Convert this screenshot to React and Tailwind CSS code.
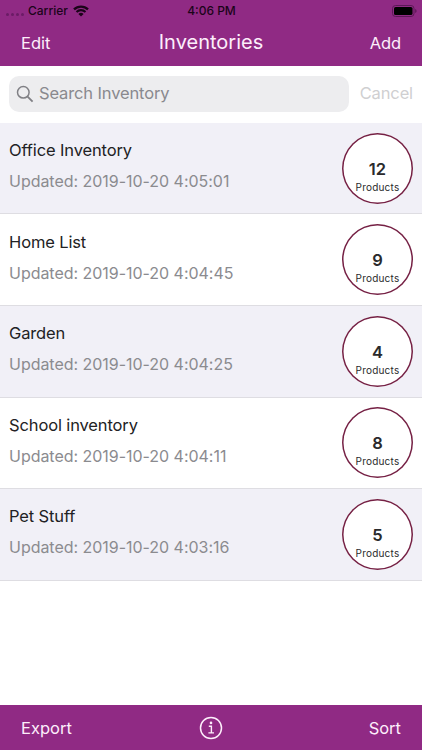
import React from "react";

const inventories = [
  { name: "Office Inventory", updated: "2019-10-20 4:05:01", count: 12 },
  { name: "Home List", updated: "2019-10-20 4:04:45", count: 9 },
  { name: "Garden", updated: "2019-10-20 4:04:25", count: 4 },
  { name: "School inventory", updated: "2019-10-20 4:04:11", count: 8 },
  { name: "Pet Stuff", updated: "2019-10-20 4:03:16", count: 5 },
];

const StatusBar = () => (
  <div className="grid h-[21px] grid-cols-3 items-center pl-[6px] pr-[5px] text-[12px] font-medium text-[#1b0419]">
    <div className="flex items-center">
      {/* Signal dots */}
      <div className="mr-[4px] mt-[7px] flex gap-[2px]">
        {[0, 1, 2, 3].map((dot) => (
          <span key={dot} className="h-[3px] w-[3px] rounded-full bg-[#6b1c66]" />
        ))}
      </div>
      <span>Carrier</span>
      <svg className="ml-[5px]" width="16" height="12" viewBox="0 0 16 12" fill="none">
        <path d="M1 4.4a10 10 0 0 1 14 0" stroke="#1b0419" strokeWidth="2.3" />
        <path d="M3.5 7a6.4 6.4 0 0 1 9 0" stroke="#1b0419" strokeWidth="2.1" />
        <path d="M8 11.6 5.4 8.9a3.8 3.8 0 0 1 5.2 0Z" fill="#1b0419" />
      </svg>
    </div>
    <span className="text-center">4:06 PM</span>
    <svg className="justify-self-end" width="25" height="12" viewBox="0 0 25 12">
      <rect x="0.5" y="0.5" width="21.5" height="11" rx="3" fill="none" stroke="#5c1857" />
      <rect x="2" y="2" width="18.5" height="8" rx="1.6" fill="#000" />
      <path d="M23.2 4v4q1.4-.5 1.4-2t-1.4-2Z" fill="#5c1857" />
    </svg>
  </div>
);

const SearchBar = () => (
  <div className="flex h-[57.4px] items-center px-[9px] text-[16.5px] tracking-[-0.13px]">
    <div className="flex h-9 w-[340px] items-center rounded-[10px] bg-[#ededef] pl-[7px] text-[#89898e]">
      <svg className="mr-[5px]" width="18" height="18" viewBox="0 0 18 18" fill="none" stroke="#808085">
        <circle cx="7.3" cy="7.3" r="5.8" strokeWidth="1.5" />
        <path d="m11.6 11.6 5 5" strokeWidth="1.9" />
      </svg>
      <span className="pb-px">Search Inventory</span>
    </div>
    <span className="ml-auto pb-px text-[#cfcfd1]">Cancel</span>
  </div>
);

const InventoryRow = ({ item }) => (
  <li className="flex h-[91.6px] items-center justify-between border-b border-[#dedde2] px-[9px] odd:bg-[#f1f0f7]">
    <div className="pb-[5.5px]">
      <p className="text-[16.5px] leading-6 tracking-[-0.13px] text-[#222224]">{item.name}</p>
      <p className="mt-[7px] text-[16px] leading-6 tracking-[-0.03px] text-[#8b8b8f]">
        Updated: {item.updated}
      </p>
    </div>
    <div className="flex h-[71px] w-[71px] flex-col items-center rounded-full bg-white pt-[26px] text-[#2a2a2c] shadow-[inset_0_0_0_1.5px_#752044]">
      <span className="text-[16.5px] font-semibold leading-5">{item.count}</span>
      <span className="text-[10px] leading-4 tracking-[0.2px]">Products</span>
    </div>
  </li>
);

const App = () => {
  return (
    <div className="flex h-[750px] w-[422px] flex-col overflow-hidden bg-white font-['Inter',sans-serif]">
      <header className="h-[65.5px] shrink-0 bg-[#902a84] text-[#fdeefb]">
        <StatusBar />
        <div className="grid h-[45px] grid-cols-3 items-center px-[21px] text-[16.5px]">
          <span className="pb-px">Edit</span>
          <span className="pb-[4px] text-center text-[20px]">Inventories</span>
          <span className="pb-px text-right tracking-[-0.1px]">Add</span>
        </div>
      </header>

      <SearchBar />

      <ul className="flex-1">
        {inventories.map((item) => (
          <InventoryRow key={item.name} item={item} />
        ))}
      </ul>

      <footer className="grid h-[45px] shrink-0 grid-cols-3 items-center bg-[#902a84] px-[21px] text-[16.5px] text-[#fdeefb]">
        <span className="pt-px">Export</span>
        <svg className="justify-self-center" width="24" height="24" viewBox="0 0 24 24" fill="none" stroke="#fdeefb">
          <circle cx="12" cy="12" r="10.5" strokeWidth="1.5" />
          <path d="M9.8 10.3h2.6v6.4M9.4 16.9h5.6" strokeWidth="1.4" />
          <circle cx="12" cy="6.9" r="1.3" fill="#fdeefb" stroke="none" />
        </svg>
        <span className="pt-px text-right">Sort</span>
      </footer>
    </div>
  );
};

export default App;
